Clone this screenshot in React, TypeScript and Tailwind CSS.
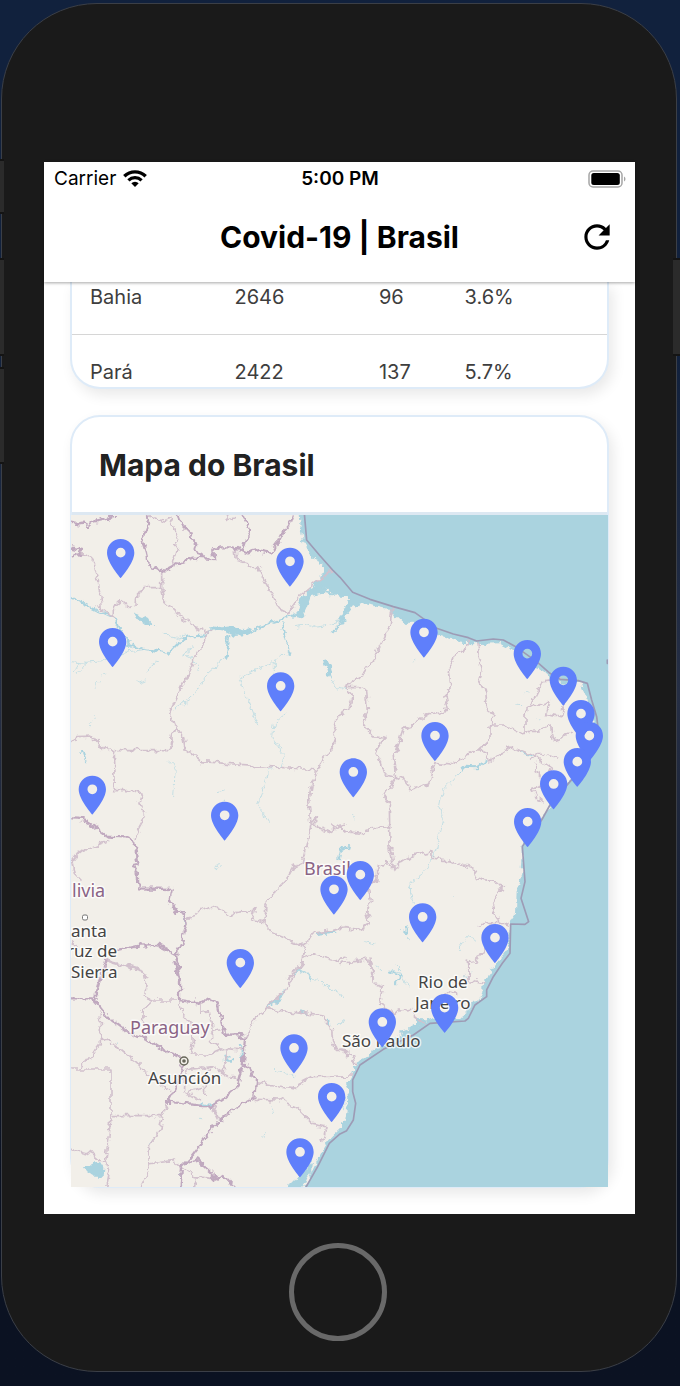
import React from "react";
import { MdRefresh } from "react-icons/md";

type Row = { state: string; cases: string; deaths: string; rate: string };

const rows: Row[] = [
  { state: "Bahia", cases: "2646", deaths: "96", rate: "3.6%" },
  { state: "Pará", cases: "2422", deaths: "137", rate: "5.7%" },
];

// Map geometry is drawn on a grid three times finer than the labels.
const LAND =
  "M0 0H700L705 60 712 100 728 130 745 150 772 160 770 185 762 205 745 225 760 240 790 235 800 255 822 260 852 262 842 290 822 335 837 322 862 290 892 278 932 290 972 300 985 322 997 318 1022 343 1037 335 1067 345 1122 377 1182 397 1222 402 1302 400 1352 425 1392 460 1442 492 1462 517 1545 520 1562 560 1577 610 1587 660 1575 740 1522 800 1472 860 1432 920 1392 970 1367 1000 1367 1090 1352 1140 1350 1210 1332 1235 1330 1280 1322 1320 1300 1350 1272 1385 1262 1410 1252 1440 1247 1465 1222 1480 1207 1505 1180 1525 1150 1522 1122 1518 1080 1532 1065 1520 1052 1535 1062 1548 1050 1560 1022 1565 987 1585 952 1605 922 1625 882 1650 867 1670 857 1700 842 1730 847 1770 837 1830 822 1860 790 1890 765 1930 740 1980 712 2040H0Z";

const SEA_LIMIT =
  "M715 10L722 90 760 135 800 180 822 202 860 247 912 268 982 290 1047 308 1112 355 1162 372 1207 383 1232 393 1282 387 1312 390 1352 412 1412 455 1452 490 1482 508 1537 512 1564 520 1577 570 1592 620 1597 660 1590 700 1562 760 1512 815 1452 885 1427 930 1382 990 1369 1010 1377 1115 1365 1165 1388 1235 1377 1243 1334 1242 1332 1330 1309 1360 1282 1400 1262 1440 1262 1460 1227 1485 1207 1525 1197 1533 1092 1540 1042 1575 952 1618 882 1665 860 1710 860 1745 869 1780 862 1830 842 1862 822 1872 790 1900 755 1970 715 2040";

type Tile = { x: number; y: number; national: string; state: string; river: string; stream: string; lake: string };

const tiles: Tile[] = [
  {
    x: 0,
    y: 0,
    national:
      "M15 35L40 40 52 38 68 50 85 35 115 28 148 17M240 15L250 40 240 65 230 95 240 125 243 150 262 172 295 182 318 170 345 158 380 143 445 147 442 118 465 112 505 112 545 130 580 122 615 128 635 100 650 70 670 45 680 15M335 15L345 40 373 68 385 105 408 140M530 15L550 55 540 90 530 122M15 112L48 120 40 135 15 142",
    state:
      "M245 20L290 30 310 22 335 85 330 120 318 165M480 15L485 28 505 20M48 130L78 145 85 180 97 210 100 240 110 270 92 290 145 325 145 290 165 272 190 292 210 285 212 260 230 233 287 233M287 180L287 233 292 270 330 305 335 318 370 340 415 368 437 360M425 368L312 605 328 645M328 645L318 680 315 720M328 645L350 680 358 720M508 120L510 150 545 160 580 180 600 220 625 265 640 300 665 312 680 290 700 260 735 230 765 205 800 180M15 700L35 680 80 678 100 705 110 720M840 605L812 620 803 655 810 680 795 720",
    river:
      "M15 263L60 285 100 305 145 325 160 360 190 400 240 418 310 428 350 385 420 375M420 375L440 355 480 360 520 372 575 352 640 330 690 315 715 280 740 240 770 225M490 378L482 440M705 310L725 240M735 240L795 250M745 232L800 240M645 340L660 395 672 432M775 455L790 500M798 370L840 320M180 390L200 410",
    stream:
      "M482 440L420 495 380 560 325 598M15 455L60 460 110 455 190 425 240 418M35 490L60 460M40 460L25 485M672 432L640 430 625 455 520 505 545 570 575 645M625 455L625 490M685 350L720 345 750 352 775 348 840 330M790 500L808 530 840 537M660 610L625 640 620 680 650 720M290 370L330 382 360 375M350 430L380 445 400 480M385 410L350 435M85 535L100 515M110 495L118 485M210 520L235 510M235 485L275 455M70 645L88 620M160 360L150 340",
    lake: "M205 310L225 318 240 312 248 328 265 345 240 345 220 330ZM435 345L470 352 500 348 545 360 560 355 540 375 505 378 480 366 445 360ZM690 318L702 270 730 238 775 232 778 246 735 255 722 290 708 322ZM780 450L795 465 798 488 788 490 780 470Z",
  },
  {
    x: 822,
    y: 0,
    national: "",
    state:
      "M158 290L150 345 125 400 100 450 72 490 15 530M158 290L150 345 125 400 100 450 72 490 15 530M15 530L40 560 30 590 0 612M15 530L60 530 80 545 85 600 68 635 100 680 135 685 112 720M385 395L382 412 345 440 325 480 330 535 315 560 325 600 265 612 190 660 170 720M410 393L415 440 425 470 417 510 433 540 440 600 462 615 450 650 450 690 415 720M455 645L495 645 540 668 600 662 635 645 640 690 690 670M665 508L610 512 590 555 562 590 555 620 555 665M562 590L590 590 630 575 620 610 665 620 670 585M500 715L520 710",
    river: "M30 265L10 310 0 335M160 300L200 335 235 335M300 370L350 388 400 400 480 392",
    stream: "M215 455L225 448M555 548L568 546M525 585L540 587M585 628L598 630",
    lake: "",
  },
  {
    x: 0,
    y: 690,
    national:
      "M15 235L40 236 60 242 90 265 125 290 180 292 205 305 215 375 200 380 215 405 218 445 320 447 312 485 325 508 348 518 362 550 350 600 330 640 338 680 345 720M155 632L220 617 275 615 328 642",
    state:
      "M85 0L125 35 145 32M145 32L148 152 205 152 232 160 222 190 238 228 215 270 205 292M145 32L315 32 320 0M355 0L360 30 380 45 405 65 755 90M755 90L775 55 800 15 808 0M755 90L735 140 728 180 735 250L755 235 745 255M735 255L760 262 800 278 805 255 820 262 840 255M735 255L720 320 708 370 685 380 665 415 630 450 600 490 597 545M597 545L557 540 570 500 550 520 520 515 490 525 440 497 405 508 385 530 365 535M597 545L610 575 715 618M715 620L740 580 800 572 840 560M715 620L712 660 685 690 665 720M715 655L745 645 800 660 840 655M125 300L40 335 18 365 25 400 45 420M120 660L230 690 245 720M125 655L108 690 88 760M15 605L30 620",
    river: "M45 30L60 70M750 583L805 575M348 515L360 550M700 692L740 715M820 355L825 330 840 325",
    stream:
      "M310 65L325 80 320 170M625 0L640 30 655 50 645 80 610 85 590 150 575 190 590 215 610 250M455 155L475 150M470 180L465 195M715 640L715 615M460 368A8 8 0 1 0 466 375",
    lake: "",
  },
  {
    x: 822,
    y: 690,
    national: "",
    state:
      "M130 0L105 40 125 75 135 105 170 112M180 0L162 40 170 112M170 112L130 165 148 190 150 320 160 385M0 258L20 275 70 282 75 265 150 260M170 112L190 120 215 148 270 130 285 70 330 75 415 28 450 0M415 28L440 40 448 68 515 22 575 45 640 90M575 60L600 40 650 60M585 70L600 110M615 185L590 175 575 145 610 135M160 385L215 348 275 335 277 355 330 360 405 390 412 412 490 435 455 490 472 540M160 385L135 365 130 378 115 375 110 425 80 425 92 480 80 515 90 550 60 568 0 562M420 560L440 545 475 545 500 555M430 630L410 665 385 670 382 720M0 670L85 660 95 690 100 720",
    river: "M360 95L375 80 410 82 440 60M0 330L20 325 38 320 30 312M190 575L205 580 200 560M545 35L575 50M555 305L545 380",
    stream:
      "M360 95L330 130 310 150 300 200 310 240 305 260 285 340 250 400 210 430 212 460 220 490M35 220L42 240M70 605L105 612M330 480L340 470M205 580L210 600M355 630L385 590 410 600M105 675L125 692M150 690L185 700M375 715L390 690",
    lake: "",
  },
  {
    x: 0,
    y: 1350,
    national:
      "M325 0L342 60 342 120 400 128 420 118 455 130 465 180 478 225 520 222 537 235 530 320 515 380 470 420 430 440 305 425 335 370 355 310M15 115L78 115 130 175 190 220 240 235 300 275 350 295M525 325L548 320 570 360 565 410 510 440 455 485 375 590 345 620 340 690M360 610L395 598 440 640 450 665 470 645 510 690M118 0L85 120",
    state:
      "M130 5L235 35 240 75 235 110 262 120 330 120M262 120L232 150 230 185M103 140L103 250 45 325M15 327L135 327 135 467 290 467M135 467L130 520 118 610 130 640 120 690M103 235L150 255 215 310 240 340 310 395M305 425L290 467 280 510 250 560 248 640 222 690M250 612L320 602 345 620 385 650 440 655M15 568L85 585 115 610M340 120L345 155 375 190 380 260 370 285 430 285 475 265 525 270M405 130L405 160 430 155 435 185 440 230 435 245 470 270M435 215L465 210M480 265L480 310M360 330L440 320 470 340 515 360M470 340L475 310M440 320L415 345 420 410M360 330L355 395 400 420M370 395L410 385M540 230L555 190 600 145 660 90 685 40 712 5M600 145L705 160 770 168 795 200 800 240 808 268 840 268M570 365L640 378 695 385 705 365 735 350 840 348M565 418L640 420 690 440 740 493 780 500 770 545 762 540M440 440L460 480M390 660L385 690",
    river: "M610 140L640 115 660 85M685 45L700 22M400 437L438 432M410 430L430 440M475 290L500 305M530 300L525 260M785 175L790 190M705 157L720 163",
    stream:
      "M700 30L730 50 760 55 790 85 830 105M808 187L835 190M625 322L655 340 690 350M615 440L622 455M597 530L600 515M150 248L156 252M400 475L406 476M500 305L470 300M250 555L262 540M340 640L345 680M770 75L800 90",
    lake: "M48 615L70 615 85 607 100 605 112 625 110 650 85 650 65 635ZM662 690L668 672 692 660 700 640 725 625 738 600 735 640 718 660 705 690Z",
  },
  {
    x: 822,
    y: 1350,
    national: "",
    state:
      "M90 0L100 70 130 80 122 130 150 150 160 165 175 150 215 145M382 0L385 60 435 72M0 268L20 272 20 290 40 285 48 315M0 348L35 348M225 150L220 165 250 190M350 100L320 95 310 110",
    river: "M150 35L185 48M165 70L190 45M440 60L430 85M400 130L380 155M235 200L265 182",
    stream: "M165 15L190 40 205 80M0 187L15 190M20 415L10 445",
    lake: "M175 215L200 210 225 195 240 195 225 220 190 225Z",
  },
];

const pins: { name: string; x: number; y: number }[] = [
  { name: "Roraima", x: 164, y: 204 },
  { name: "Amapá", x: 672, y: 230 },
  { name: "Amazonas", x: 140, y: 471 },
  { name: "Pará", x: 644, y: 604 },
  { name: "Maranhão", x: 1074, y: 443 },
  { name: "Ceará", x: 1384, y: 507 },
  { name: "Rio Grande do Norte", x: 1492, y: 587 },
  { name: "Paraíba", x: 1545, y: 687 },
  { name: "Pernambuco", x: 1570, y: 753 },
  { name: "Piauí", x: 1107, y: 753 },
  { name: "Alagoas", x: 1534, y: 831 },
  { name: "Sergipe", x: 1463, y: 898 },
  { name: "Bahia", x: 1385, y: 1011 },
  { name: "Tocantins", x: 862, y: 862 },
  { name: "Distrito Federal", x: 883, y: 1170 },
  { name: "Minas Gerais", x: 1070, y: 1297 },
  { name: "Espírito Santo", x: 1287, y: 1359 },
  { name: "Rondônia", x: 79, y: 914 },
  { name: "Mato Grosso", x: 476, y: 992 },
  { name: "Goiás", x: 804, y: 1214 },
  { name: "Mato Grosso do Sul", x: 523, y: 1434 },
  { name: "Paraná", x: 684, y: 1690 },
  { name: "Santa Catarina", x: 797, y: 1836 },
  { name: "Rio Grande do Sul", x: 702, y: 2002 },
  { name: "Rio de Janeiro", x: 1136, y: 1569 },
  { name: "São Paulo", x: 949, y: 1612 },
];

const PIN =
  "M12 2C8.13 2 5 5.13 5 9c0 5.25 7 13 7 13s7-7.75 7-13c0-3.87-3.13-7-7-7zm0 9.5a2.5 2.5 0 0 1 0-5 2.5 2.5 0 0 1 0 5z";

const countries = [
  { text: "Brasil", x: 304, y: 875 },
  { text: "livia", x: 72, y: 897 },
  { text: "Paraguay", x: 130, y: 1034 },
];

const cities = [
  { text: "anta", x: 71, y: 937 },
  { text: "ruz de", x: 67, y: 957 },
  { text: "Sierra", x: 71, y: 978 },
  { text: "Asunción", x: 148, y: 1084 },
  { text: "Rio de", x: 418, y: 988 },
  { text: "Janeiro", x: 415, y: 1009 },
  { text: "São Paulo", x: 342, y: 1047 },
];

function BrazilMap() {
  return (
    <svg viewBox="71 515 537 672" className="block h-auto w-full" role="img" aria-label="Mapa do Brasil">
      <defs>
        <filter id="rough" x="-5%" y="-5%" width="110%" height="110%" colorInterpolationFilters="sRGB">
          <feTurbulence type="fractalNoise" baseFrequency="0.045" numOctaves="3" seed="4" />
          <feDisplacementMap in="SourceGraphic" scale="26" xChannelSelector="R" yChannelSelector="G" />
        </filter>
      </defs>
      <rect x="71" y="515" width="537" height="673" fill="#aad3df" />
      <g transform="translate(66 510) scale(.33333)" fill="none" strokeLinejoin="round" strokeLinecap="round">
        <g filter="url(#rough)">
          <path d={LAND} fill="#f2efe9" />
          <path d="M717 2040L740 1992 752 1965" stroke="#aad3df" strokeWidth="5" />
          {tiles.map((t) => (
            <g key={`${t.x}-${t.y}`} transform={`translate(${t.x} ${t.y})`}>
              <path d={t.stream} stroke="#c5dfe4" strokeWidth="3" />
              <path d={t.river} stroke="#aad3df" strokeWidth="6" />
              <path d={t.lake} fill="#aad3df" />
              <path d={t.state} stroke="#d2c1cd" strokeWidth="5" />
              <path d={t.national} stroke="#c0a9bf" strokeWidth="7" />
            </g>
          ))}
        </g>
        <path d={SEA_LIMIT} stroke="#9d9bb5" strokeWidth="5" />
        <path d="M1624 450v10" stroke="#9d9bb5" strokeWidth="5" />
      </g>
      <circle cx="184" cy="1061" r="4" fill="#f2efe9" stroke="#666659" strokeWidth="1.5" />
      <circle cx="184" cy="1061" r="1.8" fill="#666659" />
      <rect x="82.500" y="915" width="5" height="5" rx="1.500" fill="#fff" stroke="#777" />
      <g
        fontFamily="'Noto Sans', sans-serif"
        stroke="#fff"
        strokeOpacity=".75"
        strokeWidth="3"
        strokeLinejoin="round"
        paintOrder="stroke"
      >
        <g fill="#8a6385" fontSize="18">
          {countries.map((l) => (
            <text key={l.text} x={l.x} y={l.y}>
              {l.text}
            </text>
          ))}
        </g>
        <g fill="#444" fontSize="17">
          {cities.map((l) => (
            <text key={l.text} x={l.x} y={l.y}>
              {l.text}
            </text>
          ))}
        </g>
      </g>
      <g transform="translate(66 510) scale(.33333)" fill="#5f7ffb">
        {pins.map((p) => (
          <path
            key={p.name}
            role="img"
            aria-label={p.name}
            transform={`translate(${p.x} ${p.y}) scale(5.85) translate(-12 -22)`}
            d={PIN}
          />
        ))}
      </g>
    </svg>
  );
}

function WifiIcon() {
  return (
    <svg viewBox="0 0 24 17" className="h-[17px] w-6" fill="none" stroke="#000" aria-hidden="true">
      <path d="M1.300 6.200A15.500 15.500 0 0 1 22.700 6.200" strokeWidth="3.400" />
      <path d="M5.400 10.300A9.600 9.600 0 0 1 18.600 10.300" strokeWidth="3.200" />
      <path d="M12 17L8.300 13.300A5.300 5.300 0 0 1 15.700 13.300Z" fill="#000" stroke="none" />
    </svg>
  );
}

function BatteryIcon() {
  return (
    <svg viewBox="0 0 38 18" className="h-[18px] w-[38px]" aria-label="Bateria" role="img">
      <rect x="1" y="1" width="33" height="16" rx="4" fill="#fff" stroke="#a5a5a5" strokeWidth="1.500" />
      <rect x="3.300" y="3" width="28.500" height="12" rx="2.500" fill="#000" />
      <path d="M36 6.500c2 1 2 4 0 5z" fill="#a5a5a5" />
    </svg>
  );
}

function SideButton({ className }: { className: string }) {
  return <span aria-hidden="true" className={`absolute border-y-2 border-[#141414] bg-[#2b2b2b] ${className}`} />;
}

export default function App() {
  return (
    <div className="relative overflow-hidden bg-linear-to-b from-[#11213d] from-25% via-[#262f45] via-50% to-[#0b1222] to-85% pt-[3px] pr-[3px] pb-[14px] pl-px font-['Inter',sans-serif]">
      <div className="rounded-[96px] border border-[#3b3f47] bg-[#1a1a1a] pt-[158px] pr-[41px] pb-[30px] pl-[42px]">
        <main className="bg-white pb-[26px]">
          <header className="relative bg-white shadow-[0_1px_3px_rgba(0,0,0,0.35)]">
            <div className="grid h-[33px] grid-cols-3 items-center pr-[9px] pl-[10px] text-[19px] leading-6 text-black">
              <div className="flex items-center gap-[7px]">
                <span>Carrier</span>
                <WifiIcon />
              </div>
              <span className="text-center font-semibold">5:00 PM</span>
              <span className="justify-self-end">
                <BatteryIcon />
              </span>
            </div>
            <div className="grid h-[87px] grid-cols-[38px_1fr_38px] items-center px-[19px] pb-[3px]">
              <h1 className="col-start-2 text-center text-[30px] leading-9 font-bold text-black">
                Covid-19 | Brasil
              </h1>
              <button type="button" aria-label="Atualizar" className="text-black">
                <MdRefresh className="size-[38px]" />
              </button>
            </div>
          </header>

          <div className="flex flex-col gap-[26px] px-[26px]">
            <section className="overflow-hidden rounded-b-[30px] border-2 border-t-0 border-[#deebf8] bg-white shadow-[4px_6px_14px_rgba(0,0,0,0.09)]">
              <table className="w-full table-fixed text-left text-[20px] leading-6 text-[#3e3e3e]">
                <colgroup>
                  <col className="w-[30%]" />
                  <col className="w-[27%]" />
                  <col className="w-[16%]" />
                  <col className="w-[27%]" />
                </colgroup>
                <tbody>
                  {rows.map((r) => (
                    <tr
                      key={r.state}
                      className="border-b border-[#d6d6d6] *:pt-[25px] *:pb-[25px] first:*:pt-[3px] last:border-b-0 last:*:pb-[3px]"
                    >
                      <td className="pl-[18px]">{r.state}</td>
                      <td className="pl-0.5">{r.cases}</td>
                      <td className="pl-0.5">{r.deaths}</td>
                      <td className="pl-0.5">{r.rate}</td>
                    </tr>
                  ))}
                </tbody>
              </table>
            </section>

            <section className="rounded-[30px] border-2 border-[#deebf8] bg-white shadow-[4px_6px_14px_rgba(0,0,0,0.09)]">
              <div className="flex h-[98px] items-center border-b-3 border-[#dde8f2] pl-[27px]">
                <h2 className="text-[30px] leading-9 font-bold text-[#222]">Mapa do Brasil</h2>
              </div>
              <div className="-mx-px -mb-px">
                <BrazilMap />
              </div>
            </section>
          </div>
        </main>

        <div className="flex justify-center pt-[29px] pr-[3px]">
          <button
            type="button"
            aria-label="Início"
            className="size-[98px] rounded-full border-5 border-[#696969]"
          />
        </div>
      </div>

      <SideButton className="top-[159px] left-0 h-[55px] w-1" />
      <SideButton className="top-[258px] left-0 h-[98px] w-1" />
      <SideButton className="top-[367px] left-0 h-[97px] w-1" />
      <SideButton className="top-[258px] right-0 h-[98px] w-[7px]" />
    </div>
  );
}
